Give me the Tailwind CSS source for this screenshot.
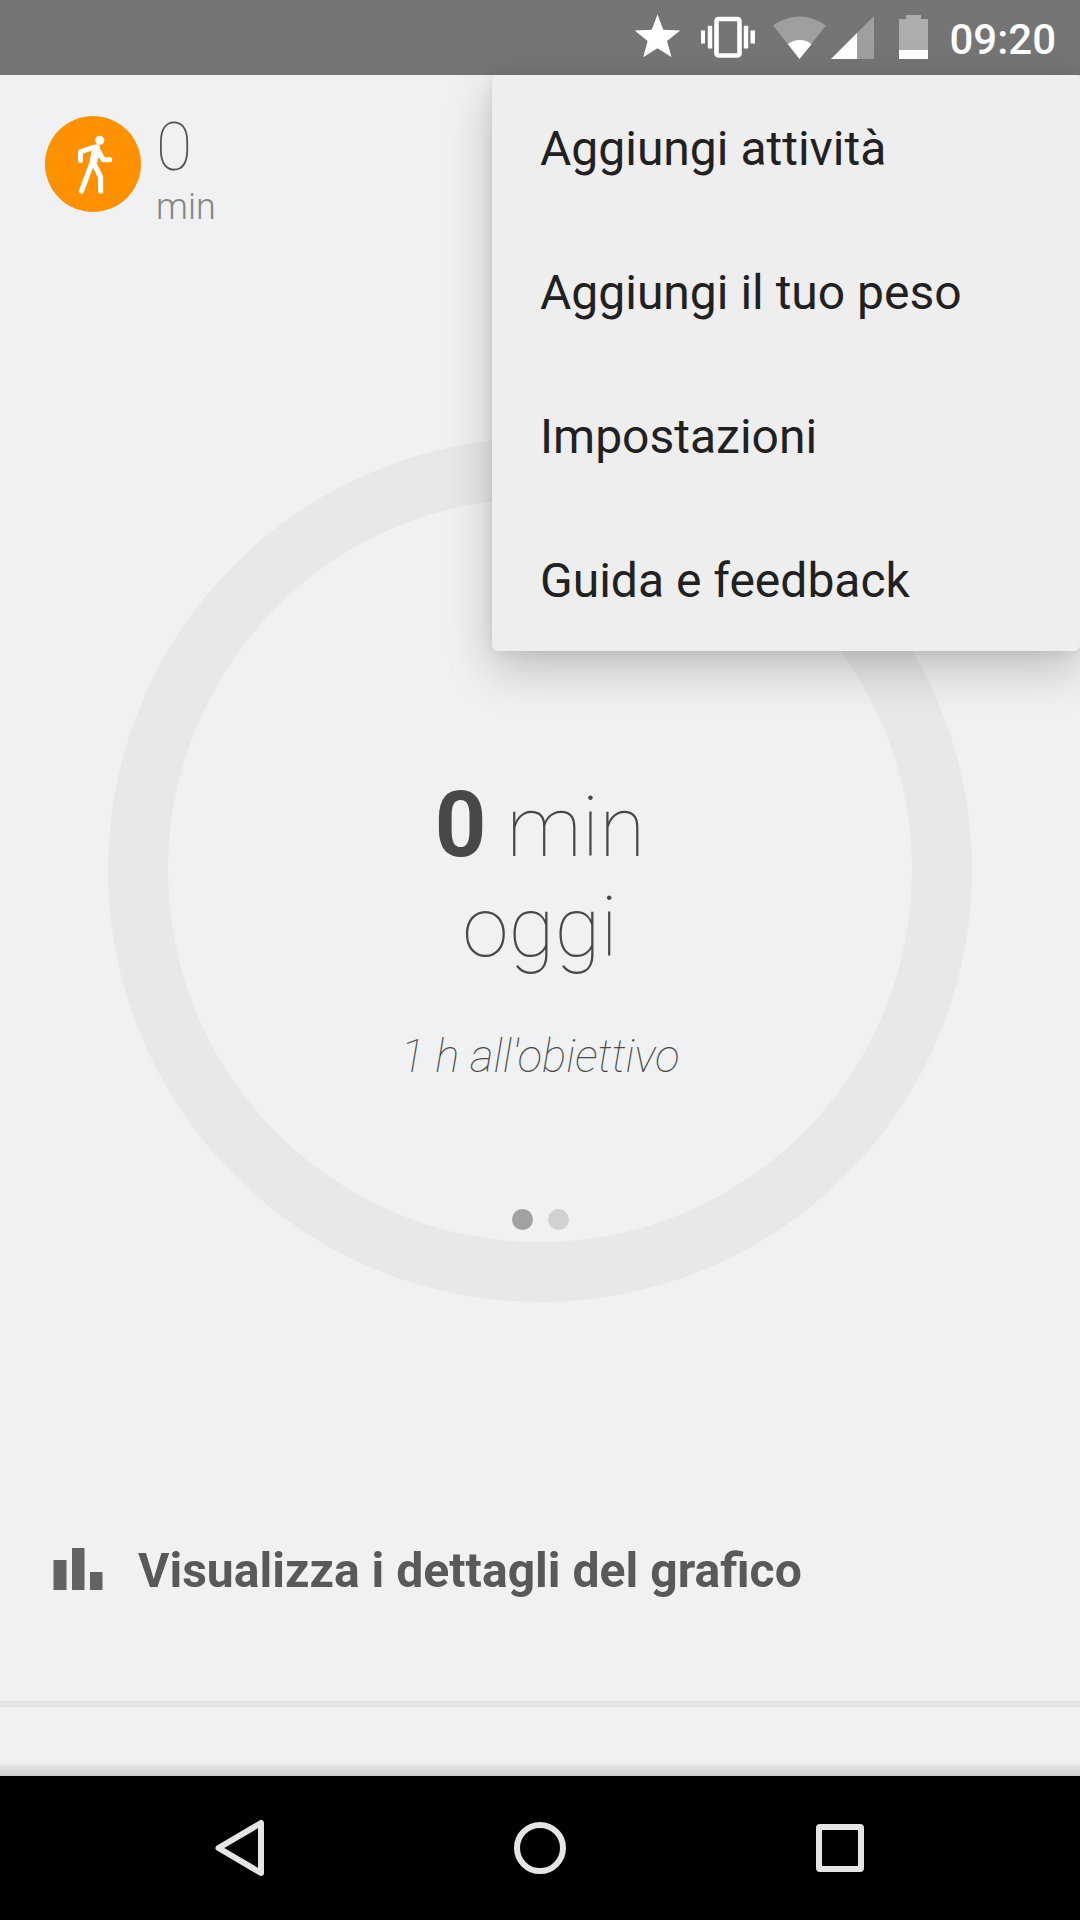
<!DOCTYPE html>
<html lang="it">
<head>
<meta charset="utf-8">
<title>Fit</title>
<script src="https://cdn.jsdelivr.net/npm/@tailwindcss/browser@4"></script>
</head>
<body class="bg-black font-['Roboto',sans-serif]">
<div class="relative flex h-[1920px] w-[1080px] flex-col overflow-hidden bg-[#eff1f3]">

  <!-- Status bar -->
  <header class="flex h-[75px] shrink-0 items-center justify-end bg-[#757575] pr-[24px]">
    <svg class="h-[75px] w-[66px]" viewBox="635 0 66 75" fill="#fff"><path d="M657.5 14.5l5.8 15.2 16.9.8-13.2 10.6 4.6 16.1-14.1-8.9-14.3 8.9 4.4-16.1-13-10.6 17.1-.8z"/></svg>
    <svg class="h-[75px] w-[72px]" viewBox="701 0 72 75" fill="#fff"><path d="M701 30.500h4v13h-4zM707.800 25.800h4.400v22.700h-4.400zM743.800 25.800h4.400v22.700h-4.400zM750.500 30.500h4.500v13h-4.500z"/><rect x="716.500" y="19" width="23" height="36.500" rx="2" fill="none" stroke="#fff" stroke-width="4.600"/></svg>
    <svg class="h-[75px] w-[58px]" viewBox="773 0 58 75"><path d="M799.500 59L773 25.500a44 44 0 0 1 53 0z" fill="#9f9f9f"/><path d="M799.500 59L788 44.300a18.500 18.500 0 0 1 23.500 0z" fill="#fff"/></svg>
    <svg class="h-[75px] w-[68px]" viewBox="831 0 68 75"><path d="M831 59l43-43v43z" fill="#9f9f9f"/><path d="M831 59l26-26v26z" fill="#fff"/></svg>
    <svg class="h-[75px] w-[50px]" viewBox="899 0 50 75"><path d="M906 15h15v4h7v31h-29V19h7z" fill="#adadad"/><path d="M899 50h29v9h-29z" fill="#fff"/></svg>
    <span class="pt-[5px] text-[42px] leading-[50px] font-medium text-white">09:20</span>
  </header>

  <main class="flex grow flex-col">
    <section class="flex h-[363px] items-start gap-[15px] pt-[41px] pl-[45px]">
      <div class="flex size-24 items-center justify-center rounded-full bg-[#ff9100]">
        <svg class="size-24" viewBox="0 0 96 96" fill="none" stroke="#fff" stroke-linecap="round" stroke-linejoin="round"><circle cx="54.700" cy="24.300" r="4.600" fill="#fff" stroke="none"/><path d="M48.500 31.300L35.500 35.800v8.700" stroke-width="5"/><path d="M52 32.500l6.300 11.300h6.500" stroke-width="5"/><path d="M46 30l5-1.700q2.500-.3 4 2L54 40l-2.500 9-6-2 3-14z" fill="#fff" stroke="none"/><path d="M49.500 33l-2.500 14-10.500 28M48.500 46.500l7 14.500.2 14" stroke-width="5.200"/></svg>
      </div>
      <div class="-mt-[7px] flex flex-col text-[#505255]">
        <span class="text-[66px] leading-[77px] font-[150]">0</span>
        <span class="text-4xl leading-[42px] font-light text-[#858585]">min</span>
      </div>
    </section>

    <section class="flex justify-center">
      <div class="flex size-[864px] flex-col items-center rounded-full border-[60px] border-[#e6e8ea] pt-[280px] text-[#484848]">
        <p class="text-center text-[84px] leading-[100px] font-[150]"><span class="text-[90px] leading-[90px] font-bold">0</span> min<br>oggi</p>
        <p class="mt-[52px] text-[45.5px] leading-[53px] font-thin italic">1 h all'obiettivo</p>
        <div class="mt-[126px] flex gap-[15px]">
          <i class="size-[21px] rounded-full bg-[#a1a1a1]"></i>
          <i class="size-[21px] rounded-full bg-[#d1d1d1]"></i>
        </div>
      </div>
    </section>

    <section class="mt-[168px] flex h-[237px] items-start border-b-[6px] border-[#e4e2e5] pt-[73px] pl-[53px]">
      <svg class="mt-[5px] h-[42px] w-[85px]" viewBox="0 0 85 42" fill="#636363"><path d="M.5 12h13v30H.5zM19 0h12.500v42H19zM37 24h12.500v18H37z"/></svg>
      <span class="text-[48.1px] leading-[56px] font-bold text-[#595959]">Visualizza i dettagli del grafico</span>
    </section>
    <div class="mt-[55px] h-[14px] bg-linear-to-b from-[#eff1f3] to-[#c9cac9]"></div>
  </main>

  <!-- Navigation bar -->
  <nav class="flex h-36 shrink-0 items-center bg-black pl-[215px]">
    <svg class="h-36 w-[299px]" viewBox="0 0 299 144" fill="none" stroke="#e5e5e5" stroke-width="6" stroke-linejoin="round"><path d="M46 47v50L3.500 72z"/></svg>
    <div class="size-[52px] rounded-full border-[6px] border-[#e5e5e5]"></div>
    <div class="ml-[250px] size-12 rounded-[4px] border-[6px] border-[#e5e5e5]"></div>
  </nav>

  <!-- Overflow menu -->
  <ul class="absolute top-[75px] right-0 flex h-[576px] w-[588px] flex-col rounded-[6px] bg-[#eeeeee] text-5xl text-[#212121] shadow-[0_18px_48px_rgba(0,0,0,0.21),0_0_16px_rgba(0,0,0,0.08)]">
    <li class="flex h-36 items-center pt-1 pl-12">Aggiungi attività</li>
    <li class="flex h-36 items-center pt-1 pl-12">Aggiungi il tuo peso</li>
    <li class="flex h-36 items-center pt-1 pl-12">Impostazioni</li>
    <li class="flex h-36 items-center pt-1 pl-12">Guida e feedback</li>
  </ul>
</div>
</body>
</html>
